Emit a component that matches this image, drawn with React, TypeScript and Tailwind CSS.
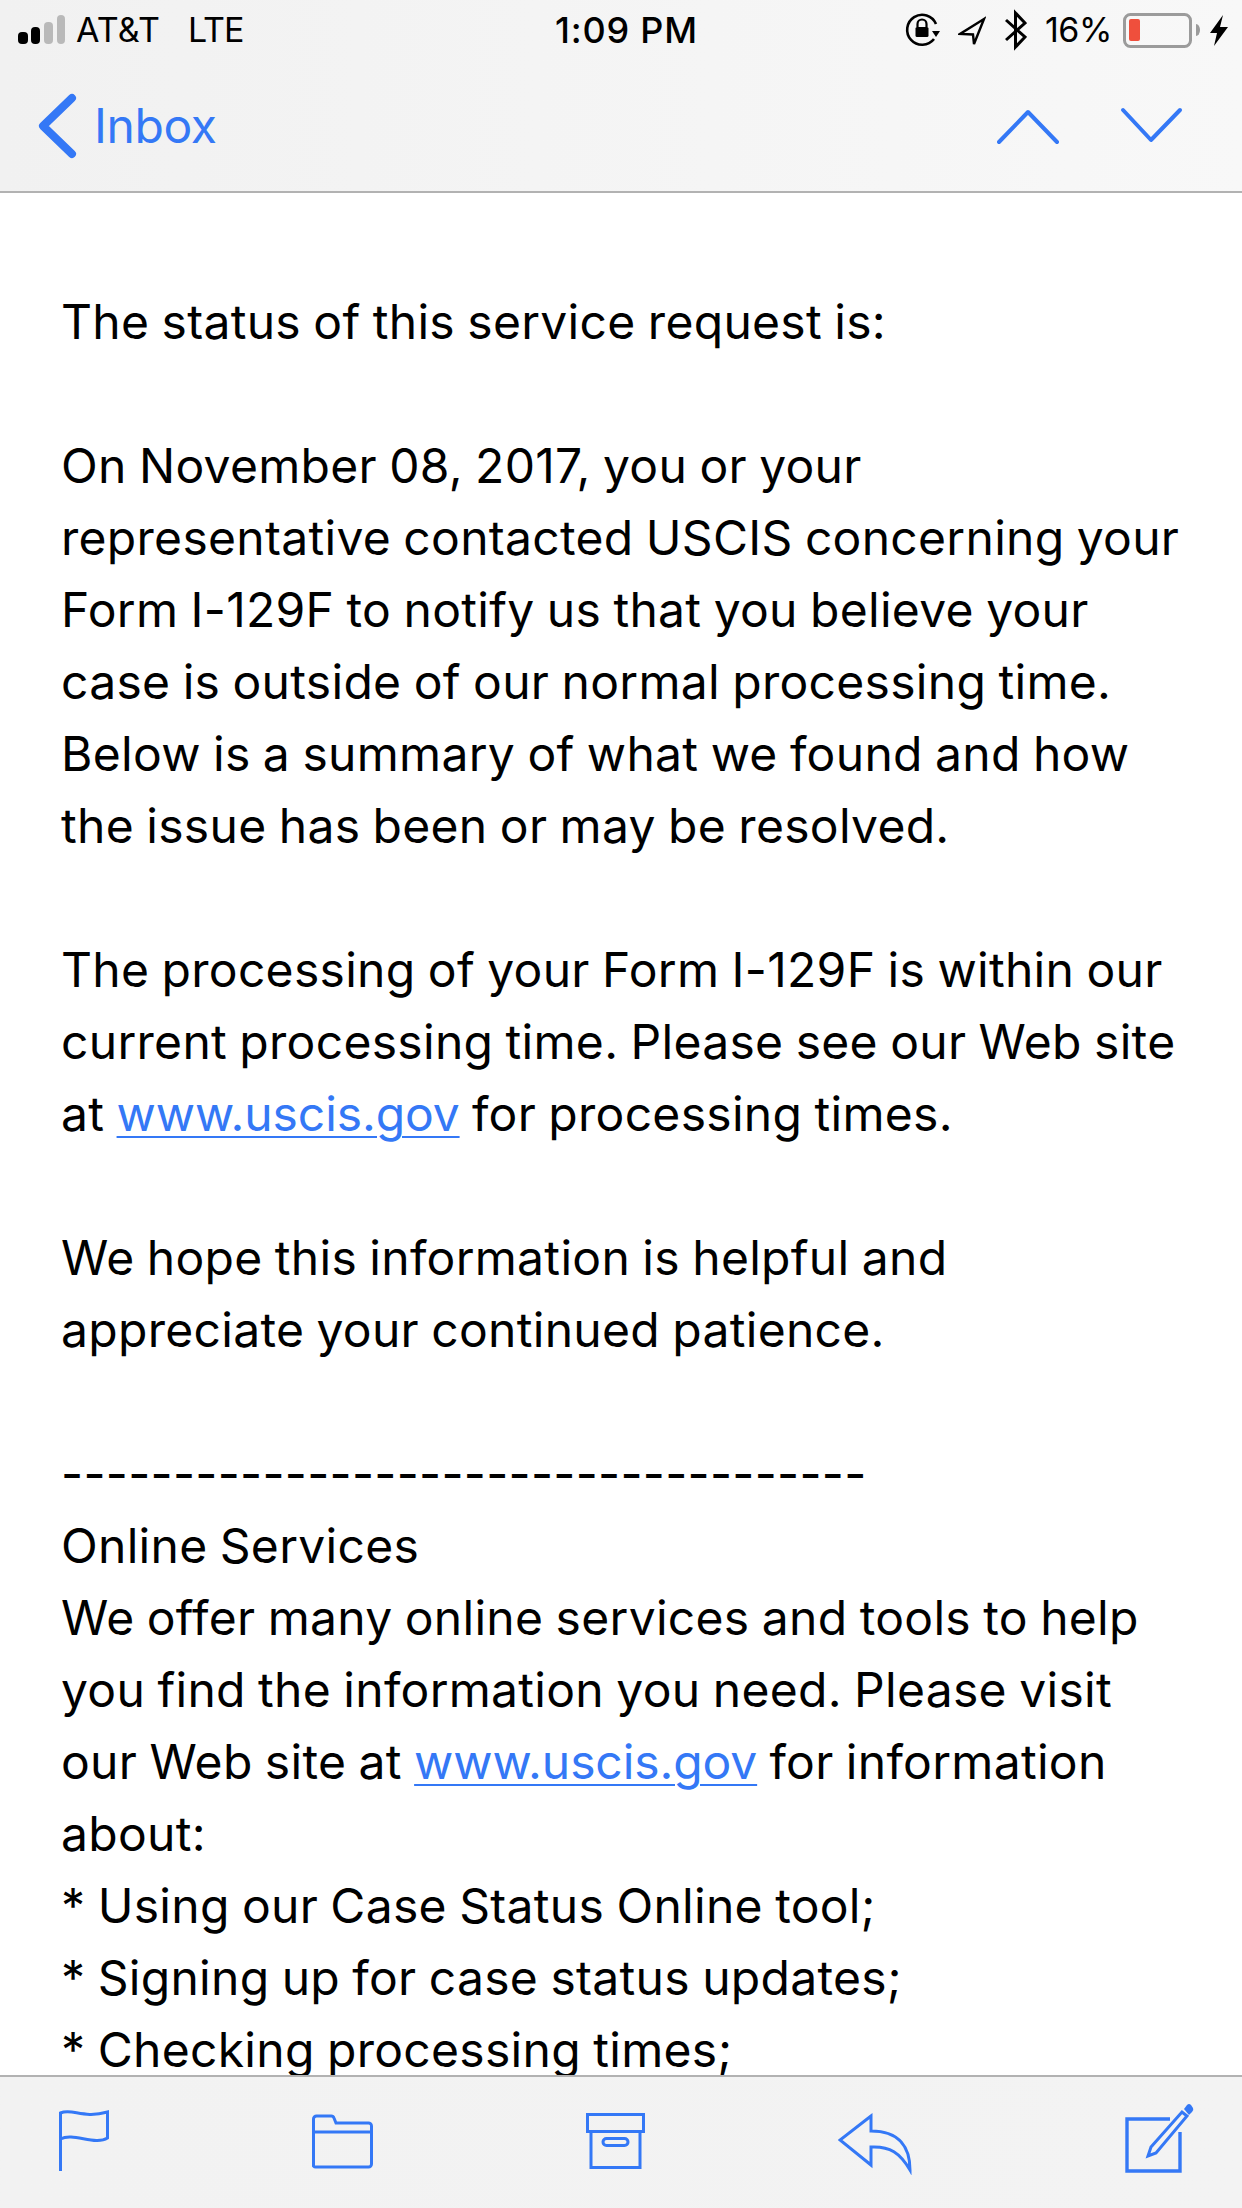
const BLUE = '#3478f6';

function SignalBars() {
  return (
    <svg width="47" height="60" viewBox="0 0 47 60" className="shrink-0">
      <rect x="0" y="32" width="10" height="12" rx="4" fill="#000" />
      <rect x="13" y="27" width="9" height="17" rx="4" fill="#000" />
      <rect x="26" y="22" width="9" height="22" rx="4" fill="#b9b9b9" />
      <rect x="39" y="15" width="8" height="29" rx="4" fill="#b9b9b9" />
    </svg>
  );
}

function OrientationLock() {
  return (
    <svg width="36" height="60" viewBox="0 0 36 60" className="shrink-0">
      <path d="M29 39 A15 15 0 1 1 31 24" fill="none" stroke="#000" strokeWidth="2.6" />
      <path d="M27 31 L35 31 L31 37 Z" fill="#000" />
      <path d="M12.5 27 V24 a4.5 4.5 0 0 1 9 0 V27" fill="none" stroke="#000" strokeWidth="2.2" />
      <rect x="10.5" y="27" width="13" height="10" rx="1.5" fill="#000" />
    </svg>
  );
}

function LocationArrow() {
  return (
    <svg width="28" height="60" viewBox="0 0 28 60" className="shrink-0">
      <path d="M26 19 L2 34 L15 34.5 L16 44 Z" fill="none" stroke="#000" strokeWidth="2.4" strokeLinejoin="miter" />
    </svg>
  );
}

function Bluetooth() {
  return (
    <svg width="22" height="60" viewBox="0 0 22 60" className="shrink-0">
      <path d="M1 20 L20 37 L10.5 47 V13 L20 23 L1 40" fill="none" stroke="#000" strokeWidth="3" />
    </svg>
  );
}

function Battery() {
  return (
    <svg width="78" height="60" viewBox="0 0 78 60" className="shrink-0">
      <rect x="1.5" y="14.5" width="66" height="32" rx="6" fill="none" stroke="#9b9b9b" strokeWidth="3" />
      <rect x="6" y="19" width="11" height="22" rx="2" fill="#ef4f3c" />
      <path d="M73 24 a4 6 0 0 1 0 12 Z" fill="#9b9b9b" />
    </svg>
  );
}

function Bolt() {
  return (
    <svg width="18" height="60" viewBox="0 0 18 60" className="shrink-0">
      <path d="M13 15 L0 33 L7 33 L4 46 L18 27 L10 27 Z" fill="#000" />
    </svg>
  );
}

function Flag() {
  return (
    <svg width="50" height="72" viewBox="0 0 50 72" className="shrink-0">
      <path
        d="M1.5 68 V10 C13 5 24 16 48.5 9 V35 C36 43 14 29 1.5 36"
        fill="none"
        stroke={BLUE}
        strokeWidth="3"
      />
    </svg>
  );
}

function Folder() {
  return (
    <svg width="61" height="72" viewBox="0 0 61 72" className="shrink-0">
      <path
        d="M1.5 63 V16 a3 3 0 0 1 3-3 H19 a3 3 0 0 1 3 2 l2 5 H56 a3 3 0 0 1 3.5 3 V61 a3 3 0 0 1-3 3 H4.5 a3 3 0 0 1-3-1 Z M1.5 29 H59.5"
        fill="none"
        stroke={BLUE}
        strokeWidth="3"
      />
    </svg>
  );
}

function ArchiveBox() {
  return (
    <svg width="59" height="72" viewBox="0 0 59 72" className="shrink-0">
      <rect x="1.5" y="11.5" width="56" height="17" fill="none" stroke={BLUE} strokeWidth="3" />
      <rect x="5" y="28.5" width="49" height="36" fill="none" stroke={BLUE} strokeWidth="3" />
      <rect x="17" y="35.5" width="25" height="7" rx="3.5" fill="none" stroke={BLUE} strokeWidth="3" />
    </svg>
  );
}

function ReplyArrow() {
  return (
    <svg width="74" height="72" viewBox="0 0 74 72" className="shrink-0">
      <path
        d="M33 13 L2 37 L33 62 V44 C52 43 62 50 72 67 C72 45 62 28 33 28 Z"
        fill="none"
        stroke={BLUE}
        strokeWidth="3"
      />
    </svg>
  );
}

function Compose() {
  return (
    <svg width="69" height="72" viewBox="0 0 69 72" className="shrink-0">
      <path d="M45 16 H2 V68 H55 V29" fill="none" stroke={BLUE} strokeWidth="3.4" />
      <path d="M26 44 L57 9 L62 13 L31 50 L23 53 Z" fill="none" stroke={BLUE} strokeWidth="3" />
      <path d="M59 6 L62 2 Q64 0 66 2 L68 5 Q69 7 67 9 L64 12 Z" fill={BLUE} />
    </svg>
  );
}

const Link = ({ children }: { children: string }) => (
  <span className="tracking-[-0.1px] text-[#3478f6] underline decoration-[2px] underline-offset-[5px]">{children}</span>
);

export default function App() {
  return (
    <div className="flex h-[2208px] w-[1242px] flex-col overflow-hidden bg-white font-['Inter','Liberation_Sans',sans-serif] text-black">
      <header className="h-[193px] shrink-0 border-b-2 border-[#b2b2b2] bg-gradient-to-r from-[#f1f1f1] to-[#f8f8f8]">
        <div className="flex h-[60px] items-center text-[34px] leading-none tracking-[-0.5px]">
          <div className="flex w-[555px] shrink-0 items-center pl-[18px]">
            <SignalBars />
            <span className="ml-[11px] tracking-[0.2px]">AT&amp;T</span>
            <span className="ml-[28px] tracking-[-1px]">LTE</span>
          </div>
          <span className="w-[350px] shrink-0 text-[36px] font-medium tracking-[0.8px]">1:09 PM</span>
          <OrientationLock />
          <div className="ml-[17px]"><LocationArrow /></div>
          <div className="ml-[19px]"><Bluetooth /></div>
          <span className="ml-[18px]">16%</span>
          <div className="ml-[11px]"><Battery /></div>
          <div className="ml-[9px]"><Bolt /></div>
        </div>
        <div className="flex h-[132px] items-start">
          <svg width="94" height="132" viewBox="0 0 94 132" className="shrink-0">
            <path d="M72 38 L43 66 L72 94" fill="none" stroke={BLUE} strokeWidth="8" strokeLinecap="round" strokeLinejoin="round" />
          </svg>
          <span className="mt-[37px] text-[48px] leading-[58px] tracking-[-0.4px] text-[#3478f6]">Inbox</span>
          <svg width="240" height="132" viewBox="0 0 240 132" className="ml-auto mr-[5px] shrink-0">
            <path d="M2 82 L31 52 L60 82" fill="none" stroke={BLUE} strokeWidth="4" strokeLinecap="round" strokeLinejoin="round" />
            <path d="M126 50 L154 80 L183 50" fill="none" stroke={BLUE} strokeWidth="4" strokeLinecap="round" strokeLinejoin="round" />
          </svg>
        </div>
      </header>

      <main className="flex-1 overflow-hidden px-[61px] pt-[93px] text-[48px] leading-[72px] tracking-[0.3px] whitespace-nowrap [word-spacing:-1.5px]">
        <p>The status of this service request is:</p>
        <p className="mt-[72px]">
          On November 08, 2017, you or your<br />
          representative contacted USCIS concerning your<br />
          Form I-129F to notify us that you believe your<br />
          case is outside of our normal processing time.<br />
          Below is a summary of what we found and how<br />
          the issue has been or may be resolved.
        </p>
        <p className="mt-[72px]">
          The processing of your Form I-129F is within our<br />
          current processing time. Please see our Web site<br />
          at <Link>www.uscis.gov</Link> for processing times.
        </p>
        <p className="mt-[72px]">
          We hope this information is helpful and<br />
          appreciate your continued patience.
        </p>
        <p className="mt-[72px]">
          ------------------------------------<br />
          Online Services<br />
          We offer many online services and tools to help<br />
          you find the information you need. Please visit<br />
          our Web site at <Link>www.uscis.gov</Link> for information<br />
          about:<br />
          * Using our Case Status Online tool;<br />
          * Signing up for case status updates;<br />
          * Checking processing times;
        </p>
      </main>

      <footer className="flex h-[133px] shrink-0 items-start border-t-2 border-[#b2b2b2] bg-gradient-to-r from-[#f2f2f2] to-[#f3f3f3] pt-[26px] pl-[59px]">
        <Flag />
        <div className="ml-[203px]"><Folder /></div>
        <div className="ml-[213px]"><ArchiveBox /></div>
        <div className="ml-[193px]"><ReplyArrow /></div>
        <div className="ml-[213px]"><Compose /></div>
      </footer>
    </div>
  );
}
